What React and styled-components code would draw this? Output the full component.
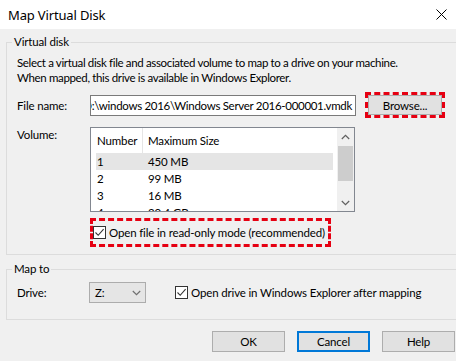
import React from "react";
import styled, { createGlobalStyle } from "styled-components";

const GlobalStyle = createGlobalStyle`
  html, body {
    margin: 0;
    padding: 0;
    background: #f0f0f0;
  }
  body {
    font-family: Lato, "Noto Sans", "Liberation Sans", sans-serif;
    font-size: 11.5px;
    letter-spacing: -0.15px;
    color: #000;
  }
`;

const Window = styled.div`
  width: 456px;
  height: 361px;
  overflow: hidden;
  background: #f0f0f0;
  display: flex;
  flex-direction: column;
`;

const TitleBar = styled.div`
  height: 29px;
  flex-shrink: 0;
  background: #fff;
  display: flex;
  align-items: center;
  justify-content: space-between;
  padding: 0 9px 0 8px;
  box-sizing: border-box;
  font-family: "Noto Sans", sans-serif;
  font-size: 13px;
  letter-spacing: -0.15px;
`;

const Group = styled.div`
  position: relative;
  flex-shrink: 0;
  margin: ${(p) => p.$top}px 0 0 6px;
  width: 460px;
  height: ${(p) => p.$height}px;
  border: 1px solid #dcdcdc;
  box-sizing: border-box;
  padding: ${(p) => p.$pad};
  display: flex;
  flex-direction: column;
`;

const Caption = styled.span`
  position: absolute;
  top: -9px;
  left: 5px;
  padding: 0 2px;
  background: #f0f0f0;
  line-height: 16px;
`;

const Description = styled.p`
  margin: 0;
  line-height: 15px;
  white-space: nowrap;
  letter-spacing: -0.35px;
`;

const Row = styled.div`
  display: flex;
  align-items: ${(p) => p.$align || "center"};
  margin-top: ${(p) => p.$top || 0}px;
`;

const Label = styled.div`
  width: ${(p) => p.$w}px;
  flex-shrink: 0;
  padding-top: ${(p) => p.$pt || 0}px;
`;

const TextField = styled.div`
  width: 266px;
  height: 21px;
  box-sizing: border-box;
  border: 1px solid #7a7a7a;
  background: #fff;
  display: flex;
  align-items: center;
  justify-content: flex-end;
  padding: 0 3px 0 5px;
  overflow: hidden;
  white-space: nowrap;
  letter-spacing: -0.3px;
`;

const Highlight = styled.div`
  border: 3px dashed #e60012;
  box-sizing: border-box;
  margin-left: ${(p) => p.$left || 0}px;
  width: ${(p) => p.$w}px;
  height: ${(p) => p.$h}px;
  display: flex;
  align-items: center;
`;

const Button = styled.button`
  font: inherit;
  letter-spacing: inherit;
  color: #000;
  width: ${(p) => p.$w || 73}px;
  height: ${(p) => p.$h || 21}px;
  padding: 0;
  box-sizing: border-box;
  background: #e1e1e1;
  border: ${(p) => (p.$default ? "2px solid #0078d7" : "1px solid #adadad")};
`;

const ListBox = styled.div`
  width: 265px;
  height: 85px;
  box-sizing: border-box;
  border: 1px solid #828790;
  background: #fff;
  display: flex;
  overflow: hidden;
`;

const ListBody = styled.div`
  flex: 1;
  overflow: hidden;
`;

const HeaderRow = styled.div`
  display: flex;
  height: 25px;
`;

const HeaderCell = styled.div`
  width: ${(p) => p.$w}px;
  padding-left: ${(p) => p.$pl}px;
  box-sizing: border-box;
  display: flex;
  align-items: center;
  white-space: nowrap;
  border-right: ${(p) => (p.$sep ? "1px solid #e5e5e5" : "none")};
`;

const ItemRow = styled.div`
  display: flex;
  align-items: center;
  height: 17px;
  margin: 0 4px 0 5px;
  padding-left: 1px;
  background: ${(p) => (p.$selected ? "#e5e5e5" : "transparent")};
`;

const ItemCell = styled.div`
  width: ${(p) => p.$w}px;
  flex-shrink: 0;
`;

const ScrollBar = styled.div`
  width: 17px;
  flex-shrink: 0;
  background: #f0f0f0;
  display: flex;
  flex-direction: column;
`;

const ScrollArrow = styled.div`
  height: 17px;
  display: flex;
  align-items: center;
  justify-content: center;
`;

const ScrollTrack = styled.div`
  flex: 1;
  padding: 1px 1px 0;
`;

const Thumb = styled.div`
  height: 35px;
  background: #cdcdcd;
`;

const CheckRow = styled.label`
  display: flex;
  align-items: center;
  gap: 3px;
  white-space: nowrap;
  margin-left: ${(p) => p.$left || 0}px;
`;

const CheckBox = styled.span`
  width: 13px;
  height: 13px;
  box-sizing: border-box;
  border: 1px solid #333;
  background: #fff;
  display: flex;
  align-items: center;
  justify-content: center;
  flex-shrink: 0;
`;

const Combo = styled.div`
  width: 57px;
  height: 21px;
  box-sizing: border-box;
  border: 1px solid #acacac;
  background: #e5e5e5;
  display: flex;
  align-items: center;
  justify-content: space-between;
  padding: 0 4px 0 5px;
`;

const Footer = styled.div`
  display: flex;
  justify-content: flex-end;
  gap: 12px;
  margin-top: 11px;
  padding-right: 1px;
`;

const Check = () => (
  <CheckBox>
    <svg width="11" height="11" viewBox="0 0 11 11">
      <path d="M1.5 5.5 L4.2 8.3 L9.6 2.2" fill="none" stroke="#333" strokeWidth="1.1" />
    </svg>
  </CheckBox>
);

const Chevron = ({ up, color = "#606060", w = 9 }) => (
  <svg width={w} height="6" viewBox="0 0 9 6">
    <path
      d={up ? "M0.8 5 L4.5 1.3 L8.2 5" : "M0.8 1 L4.5 4.7 L8.2 1"}
      fill="none"
      stroke={color}
      strokeWidth="1.2"
    />
  </svg>
);

const volumes = [
  ["1", "450 MB"],
  ["2", "99 MB"],
  ["3", "16 MB"],
  ["4", "20.4 GB"],
];

export default function App() {
  return (
    <>
      <GlobalStyle />
      <Window>
        <TitleBar>
          <span>Map Virtual Disk</span>
          <svg width="11" height="11" viewBox="0 0 11 11">
            <path d="M0.5 0.5 L10.5 10.5 M10.5 0.5 L0.5 10.5" stroke="#000" strokeWidth="1" />
          </svg>
        </TitleBar>

        <Group $top={13} $height={213} $pad="12px 10px 0">
          <Caption>Virtual disk</Caption>
          <Description>
            Select a virtual disk file and associated volume to map to a drive on your machine.
            <br />
            When mapped, this drive is available in Windows Explorer.
          </Description>

          <Row $top={7}>
            <Label $w={73}>File name:</Label>
            <TextField>D:\windows 2016\Windows Server 2016-000001.vmdk</TextField>
            <Highlight $left={9} $w={80} $h={26}>
              <Button $w={74} $h={20}>Browse...</Button>
            </Highlight>
          </Row>

          <Row $top={9} $align="flex-start">
            <Label $w={73} $pt={1}>Volume:</Label>
            <ListBox>
              <ListBody>
                <HeaderRow>
                  <HeaderCell $w={52} $pl={6} $sep>Number</HeaderCell>
                  <HeaderCell $w={150} $pl={5}>Maximum Size</HeaderCell>
                </HeaderRow>
                {volumes.map(([n, size], i) => (
                  <ItemRow key={n} $selected={i === 0}>
                    <ItemCell $w={51}>{n}</ItemCell>
                    <ItemCell $w={120}>{size}</ItemCell>
                  </ItemRow>
                ))}
              </ListBody>
              <ScrollBar>
                <ScrollArrow>
                  <Chevron up />
                </ScrollArrow>
                <ScrollTrack>
                  <Thumb />
                </ScrollTrack>
                <ScrollArrow>
                  <Chevron />
                </ScrollArrow>
              </ScrollBar>
            </ListBox>
          </Row>

          <Row $top={6}>
            <Highlight $left={73} $w={241} $h={29}>
              <CheckRow>
                <Check />
                Open file in read-only mode (recommended)
              </CheckRow>
            </Highlight>
          </Row>
        </Group>

        <Group $top={14} $height={51} $pad="12px 10px 0">
          <Caption>Map to</Caption>
          <Row>
            <Label $w={72}>Drive:</Label>
            <Combo>
              <span>Z:</span>
              <Chevron color="#707070" />
            </Combo>
            <CheckRow $left={29}>
              <Check />
              Open drive in Windows Explorer after mapping
            </CheckRow>
          </Row>
        </Group>

        <Footer>
          <Button>OK</Button>
          <Button $default>Cancel</Button>
          <Button>Help</Button>
        </Footer>
      </Window>
    </>
  );
}
